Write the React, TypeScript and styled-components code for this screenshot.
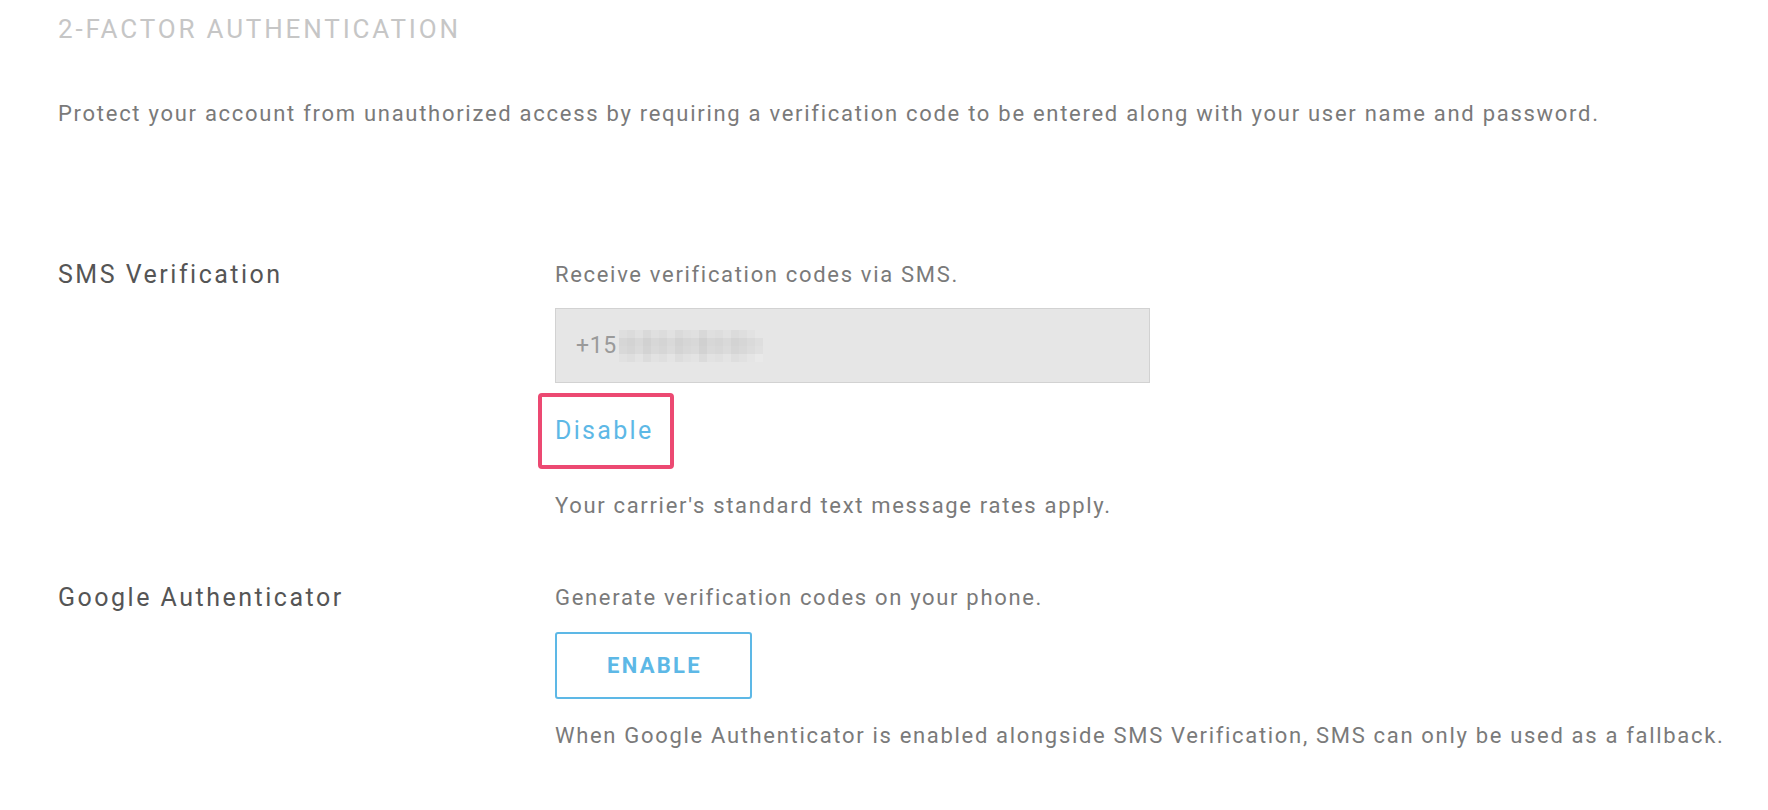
import React from "react";
import styled, { createGlobalStyle } from "styled-components";

const Global = createGlobalStyle`
  html, body { margin: 0; padding: 0; background: #ffffff; }
  body { font-family: Roboto, "Liberation Sans", Arial, sans-serif; }
  * { box-sizing: border-box; }
`;

const Page = styled.main`
  padding: 15px 0 0 58px;
  width: 1768px;
`;

const Title = styled.h2`
  margin: 0;
  font-size: 26px;
  line-height: 28px;
  font-weight: 400;
  letter-spacing: 2.85px;
  color: #c6c6c6;
`;

const Intro = styled.p`
  margin: 56px 0 0;
  font-size: 22px;
  line-height: 30px;
  letter-spacing: 1.72px;
  color: #7a7a7a;
`;

const Row = styled.section<{ $top: number }>`
  display: grid;
  grid-template-columns: 497px 1fr;
  margin-top: ${(p) => p.$top}px;
`;

const Label = styled.h3`
  margin: 0;
  font-size: 25px;
  line-height: 30px;
  font-weight: 400;
  letter-spacing: 2.5px;
  color: #555555;
`;

const Body = styled.div`
  display: flex;
  flex-direction: column;
  align-items: flex-start;
`;

const Note = styled.p<{ $top?: number }>`
  margin: ${(p) => p.$top ?? 0}px 0 0;
  font-size: 22px;
  line-height: 30px;
  letter-spacing: 1.68px;
  color: #7a7a7a;
  white-space: nowrap;
`;

const PhoneField = styled.div`
  margin-top: 18px;
  width: 595px;
  height: 75px;
  background: #e6e6e6;
  border: 1px solid #d2d2d2;
  display: flex;
  align-items: center;
  padding-left: 20px;
  font-size: 23px;
  letter-spacing: 0.6px;
  color: #9a9a9a;
`;

const Mosaic = styled.svg`
  display: block;
  margin-left: 2px;
`;

const DisableLink = styled.a`
  position: relative;
  margin-top: 33px;
  font-size: 25px;
  line-height: 30px;
  letter-spacing: 2.3px;
  color: #5db8e6;
  text-decoration: none;
  cursor: pointer;

  &::after {
    content: "";
    position: absolute;
    left: -17px;
    right: -21px;
    top: -23px;
    bottom: -23px;
    border: 4px solid #ec4972;
    border-radius: 4px;
    pointer-events: none;
  }
`;

const EnableButton = styled.button`
  margin-top: 19px;
  width: 197px;
  height: 67px;
  padding: 0 0 0 2px;
  background: #ffffff;
  border: 2px solid #5db8e6;
  border-radius: 3px;
  font-family: Roboto, "Liberation Sans", Arial, sans-serif;
  font-size: 22px;
  font-weight: 700;
  letter-spacing: 2.3px;
  color: #5db8e6;
  cursor: pointer;
`;

const shades = ["#dedede", "#d6d6d6", "#d8d8d8", "#e1e1e1"];
const offsets = [0, -3, 2, -5, 1, -2, 3, -4, 0, 2, -6, 1, -1, 3, -3, 0, -2, 2];

function tone(base: string, delta: number) {
  const v = Math.max(0, Math.min(255, parseInt(base.slice(1, 3), 16) + delta));
  const h = v.toString(16).padStart(2, "0");
  return `#${h}${h}${h}`;
}

function BlurredDigits() {
  return (
    <Mosaic width="144" height="32" viewBox="0 0 144 32" aria-hidden="true">
      {shades.map((base, r) =>
        offsets.map((d, c) => (
          <rect
            key={`${r}-${c}`}
            x={c * 8}
            y={r * 8}
            width="8"
            height="8"
            fill={tone(base, c > 15 ? d + 6 : d)}
          />
        ))
      )}
    </Mosaic>
  );
}

export default function App() {
  return (
    <>
      <Global />
      <Page>
        <Title>2-FACTOR AUTHENTICATION</Title>
        <Intro>
          Protect your account from unauthorized access by requiring a verification code to be entered along with your user name and password.
        </Intro>

        <Row $top={131}>
          <Label>SMS Verification</Label>
          <Body>
            <Note>Receive verification codes via SMS.</Note>
            <PhoneField>
              +15
              <BlurredDigits />
            </PhoneField>
            <DisableLink>Disable</DisableLink>
            <Note $top={45}>Your carrier's standard text message rates apply.</Note>
          </Body>
        </Row>

        <Row $top={62}>
          <Label>Google Authenticator</Label>
          <Body>
            <Note>Generate verification codes on your phone.</Note>
            <EnableButton>ENABLE</EnableButton>
            <Note $top={22}>When Google Authenticator is enabled alongside SMS Verification, SMS can only be used as a fallback.</Note>
          </Body>
        </Row>
      </Page>
    </>
  );
}
